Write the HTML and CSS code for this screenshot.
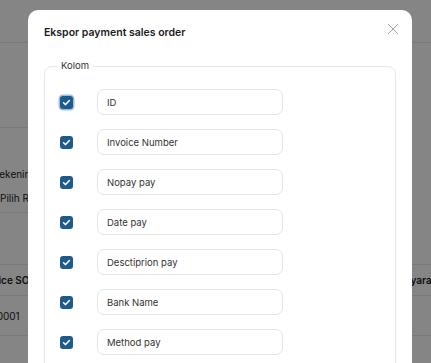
FILE: index.html
```html
<!DOCTYPE html>
<html>
<head>
  <meta charset="utf-8">
  <title>Payment sales order</title>
  <link rel="stylesheet" href="styles.css">
</head>
<body>

<div class="page">
  <div class="topbar"></div>

  <div class="filters">
    <div class="filter-label">Rekening</div>
    <div class="filter-select">Pilih Rekening</div>
  </div>

  <div class="list">
    <div class="list-row list-head">
      <div class="cell cell-invoice">Invoice SO</div>
      <div class="cell cell-method">Metode Pembayaran</div>
    </div>
    <div class="list-row">
      <div class="cell cell-invoice">SO-0001</div>
      <div class="cell cell-method">Transfer</div>
    </div>
  </div>
</div>

<div class="overlay"></div>

<div class="modal">
  <div class="modal-head">
    <h2>Ekspor payment sales order</h2>
    <button class="close" type="button">
      <svg width="14" height="14" viewBox="0 0 14 14"><path d="M2 2 L12 12 M12 2 L2 12" stroke="#a3a3a3" stroke-width="1" fill="none"/></svg>
    </button>
  </div>

  <fieldset class="columns">
    <legend>Kolom</legend>

    <div class="col-row">
      <span class="check focused"><svg width="13" height="13" viewBox="0 0 13 13"><path d="M3.6 6.7 L5.6 8.6 L9.4 4.6" stroke="#fff" stroke-width="1.5" fill="none" stroke-linecap="round" stroke-linejoin="round"/></svg></span>
      <input class="col-name" type="text" value="ID">
    </div>
    <div class="col-row">
      <span class="check"><svg width="13" height="13" viewBox="0 0 13 13"><path d="M3.6 6.7 L5.6 8.6 L9.4 4.6" stroke="#fff" stroke-width="1.5" fill="none" stroke-linecap="round" stroke-linejoin="round"/></svg></span>
      <input class="col-name" type="text" value="Invoice Number">
    </div>
    <div class="col-row">
      <span class="check"><svg width="13" height="13" viewBox="0 0 13 13"><path d="M3.6 6.7 L5.6 8.6 L9.4 4.6" stroke="#fff" stroke-width="1.5" fill="none" stroke-linecap="round" stroke-linejoin="round"/></svg></span>
      <input class="col-name" type="text" value="Nopay pay">
    </div>
    <div class="col-row">
      <span class="check"><svg width="13" height="13" viewBox="0 0 13 13"><path d="M3.6 6.7 L5.6 8.6 L9.4 4.6" stroke="#fff" stroke-width="1.5" fill="none" stroke-linecap="round" stroke-linejoin="round"/></svg></span>
      <input class="col-name" type="text" value="Date pay">
    </div>
    <div class="col-row">
      <span class="check"><svg width="13" height="13" viewBox="0 0 13 13"><path d="M3.6 6.7 L5.6 8.6 L9.4 4.6" stroke="#fff" stroke-width="1.5" fill="none" stroke-linecap="round" stroke-linejoin="round"/></svg></span>
      <input class="col-name" type="text" value="Desctiprion pay">
    </div>
    <div class="col-row">
      <span class="check"><svg width="13" height="13" viewBox="0 0 13 13"><path d="M3.6 6.7 L5.6 8.6 L9.4 4.6" stroke="#fff" stroke-width="1.5" fill="none" stroke-linecap="round" stroke-linejoin="round"/></svg></span>
      <input class="col-name" type="text" value="Bank Name">
    </div>
    <div class="col-row">
      <span class="check"><svg width="13" height="13" viewBox="0 0 13 13"><path d="M3.6 6.7 L5.6 8.6 L9.4 4.6" stroke="#fff" stroke-width="1.5" fill="none" stroke-linecap="round" stroke-linejoin="round"/></svg></span>
      <input class="col-name" type="text" value="Method pay">
    </div>
    <div class="col-row">
      <span class="check"><svg width="13" height="13" viewBox="0 0 13 13"><path d="M3.6 6.7 L5.6 8.6 L9.4 4.6" stroke="#fff" stroke-width="1.5" fill="none" stroke-linecap="round" stroke-linejoin="round"/></svg></span>
      <input class="col-name" type="text" value="Amount pay">
    </div>
  </fieldset>
</div>

</body>
</html>
```

FILE: styles.css
```css
html, body {
  height: 100%;
  overflow: hidden;
}
body {
  margin: 0;
  background: #fff;
  font-family: Inter, "Liberation Sans", sans-serif;
  color: #222;
}

/* page behind the dialog */
.page {
  width: 480px;
  margin-left: -22px;
}
.topbar {
  height: 42px;
  border-bottom: 1px solid #e8e8e8;
}
.filters {
  margin-top: 84px;
  border-top: 1px solid #e8e8e8;
  width: 160px;
  padding-top: 39px;
}
.filter-label {
  padding-left: 15px;
  font-size: 10px;
  line-height: 14px;
}
.filter-select {
  margin-top: 9px;
  padding-left: 22px;
  height: 22px;
  font-size: 10px;
  line-height: 16px;
  border-bottom: 1px solid #e8e8e8;
}
.list {
  margin-top: 51px;
  border-top: 1px solid #e8e8e8;
}
.list-row {
  display: flex;
  height: 39px;
  align-items: center;
  border-bottom: 1px solid #e8e8e8;
  font-size: 10px;
}
.list-head {
  height: 30px;
  font-weight: 600;
}
.cell-invoice {
  width: 360px;
}

/* dialog */
.overlay {
  position: fixed;
  top: 0;
  left: 0;
  right: 0;
  bottom: 0;
  background: rgba(0, 0, 0, 0.48);
}
.modal {
  position: fixed;
  top: 10px;
  left: 28px;
  width: 384px;
  bottom: -40px;
  box-sizing: border-box;
  padding: 16px;
  background: #fff;
  border-radius: 10px;
}
.modal-head {
  display: flex;
  justify-content: space-between;
  align-items: flex-start;
}
.modal-head h2 {
  margin: 0;
  font-size: 10.5px;
  line-height: 14px;
  font-weight: 600;
  color: #1c1c1c;
}
.close {
  margin: -4px -4px 0 0;
  padding: 0;
  width: 14px;
  height: 14px;
  border: 0;
  background: none;
}
.close svg {
  display: block;
}

.columns {
  margin: 19px 0 0 0;
  padding: 16px 15px 0 15px;
  border: 1px solid #e6e6e6;
  border-radius: 8px;
  min-width: 0;
}
.columns legend {
  margin-left: -3px;
  padding: 0 4px;
  font-size: 9.5px;
  line-height: 14px;
  color: #333;
}
.col-row {
  display: flex;
  align-items: center;
  height: 26px;
  margin-bottom: 14px;
}
.check {
  display: block;
  width: 13px;
  height: 13px;
  margin-right: 24px;
  border-radius: 3px;
  background: #1d5b8c;
}
.check svg {
  display: block;
}
.check.focused {
  box-shadow: 0 0 0 1.5px #9fbddb;
}
.col-name {
  box-sizing: border-box;
  width: 186px;
  height: 26px;
  padding: 0 9px;
  border: 1px solid #e4e4e4;
  border-radius: 7px;
  font-family: Inter, "Liberation Sans", sans-serif;
  font-size: 9.5px;
  color: #333;
  outline: none;
}
```
